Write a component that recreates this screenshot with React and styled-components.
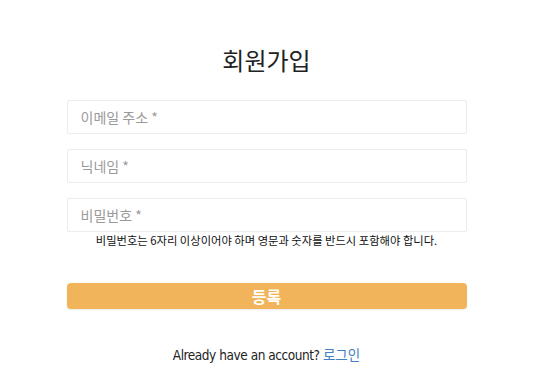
import styled, { createGlobalStyle } from "styled-components";

const Global = createGlobalStyle`
  body {
    margin: 0;
    background: #fff;
    font-family: "Noto Sans CJK KR", "Noto Sans", sans-serif;
  }
`;

const Page = styled.div`
  width: 400px;
  margin: 0 auto;
  padding-top: 42px;
  display: flex;
  flex-direction: column;
`;

const Title = styled.h2`
  margin: 0 0 22px;
  text-align: center;
  font-size: 24px;
  font-weight: 400;
  line-height: 36px;
  color: #222;
`;

const Form = styled.form`
  display: flex;
  flex-direction: column;
  gap: 15px;
`;

const Input = styled.input`
  box-sizing: border-box;
  width: 100%;
  height: 34px;
  padding: 0 13px;
  border: 1px solid #ececec;
  border-radius: 2px;
  font-family: "Noto Sans CJK KR", sans-serif;
  font-size: 14px;
  color: #333;
  outline: none;

  &::placeholder {
    color: #9a9a9a;
  }
`;

const Field = styled.div`
  display: flex;
  flex-direction: column;
`;

const Hint = styled.p`
  margin: 0;
  text-align: center;
  font-size: 11.3px;
  line-height: 17px;
  color: #111;
`;

const Submit = styled.button`
  margin-top: 34px;
  height: 26px;
  border: none;
  border-radius: 4px;
  background: #f2b45a;
  color: #fff;
  font-family: "Noto Sans CJK KR", sans-serif;
  font-size: 16px;
  font-weight: 700;
  line-height: 1;
  box-shadow: 0 1px 2px rgba(0, 0, 0, 0.08);
`;

const Footer = styled.p`
  margin: 35px 0 0;
  text-align: center;
  font-family: "DejaVu Sans Condensed", "Liberation Sans Narrow", "Liberation Sans", sans-serif;
  font-stretch: condensed;
  font-size: 13.5px;
  letter-spacing: -0.45px;
  color: #222;

  a {
    color: #3f7fc0;
    text-decoration: none;
    letter-spacing: 0;
    font-family: "Noto Sans CJK KR", sans-serif;
  }
`;

export default function App() {
  return (
    <>
      <Global />
      <Page>
        <Title>회원가입</Title>
        <Form onSubmit={(e) => e.preventDefault()}>
          <Input type="email" placeholder="이메일 주소 *" />
          <Input type="text" placeholder="닉네임 *" />
          <Field>
            <Input type="password" placeholder="비밀번호 *" />
            <Hint>비밀번호는 6자리 이상이어야 하며 영문과 숫자를 반드시 포함해야 합니다.</Hint>
          </Field>
        </Form>
        <Submit type="button">등록</Submit>
        <Footer>
          Already have an account? <a href="#">로그인</a>
        </Footer>
      </Page>
    </>
  );
}
